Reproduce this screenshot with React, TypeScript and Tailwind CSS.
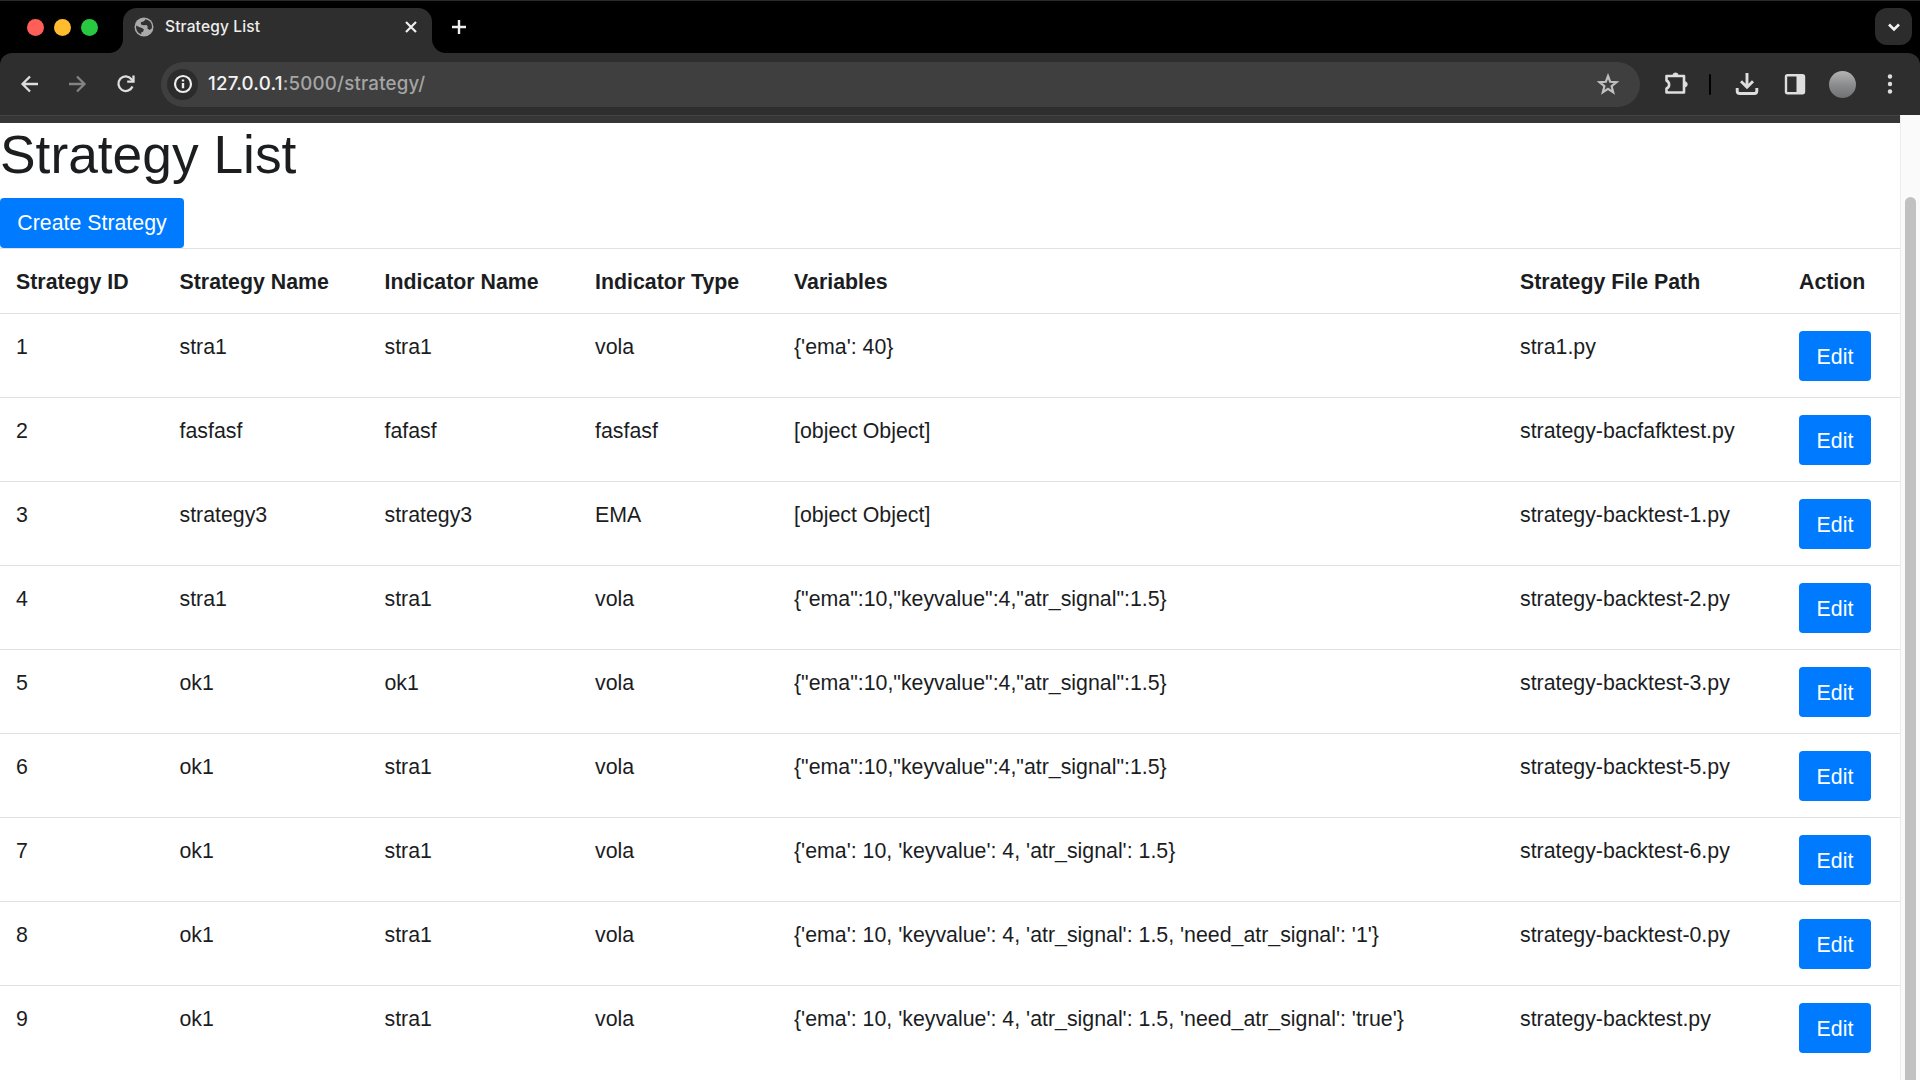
import React from "react";

type Strategy = {
  id: number;
  name: string;
  indicator: string;
  type: string;
  variables: string;
  path: string;
};

const strategies: Strategy[] = [
  { id: 1, name: "stra1", indicator: "stra1", type: "vola", variables: "{'ema': 40}", path: "stra1.py" },
  { id: 2, name: "fasfasf", indicator: "fafasf", type: "fasfasf", variables: "[object Object]", path: "strategy-bacfafktest.py" },
  { id: 3, name: "strategy3", indicator: "strategy3", type: "EMA", variables: "[object Object]", path: "strategy-backtest-1.py" },
  { id: 4, name: "stra1", indicator: "stra1", type: "vola", variables: '{"ema":10,"keyvalue":4,"atr_signal":1.5}', path: "strategy-backtest-2.py" },
  { id: 5, name: "ok1", indicator: "ok1", type: "vola", variables: '{"ema":10,"keyvalue":4,"atr_signal":1.5}', path: "strategy-backtest-3.py" },
  { id: 6, name: "ok1", indicator: "stra1", type: "vola", variables: '{"ema":10,"keyvalue":4,"atr_signal":1.5}', path: "strategy-backtest-5.py" },
  { id: 7, name: "ok1", indicator: "stra1", type: "vola", variables: "{'ema': 10, 'keyvalue': 4, 'atr_signal': 1.5}", path: "strategy-backtest-6.py" },
  { id: 8, name: "ok1", indicator: "stra1", type: "vola", variables: "{'ema': 10, 'keyvalue': 4, 'atr_signal': 1.5, 'need_atr_signal': '1'}", path: "strategy-backtest-0.py" },
  { id: 9, name: "ok1", indicator: "stra1", type: "vola", variables: "{'ema': 10, 'keyvalue': 4, 'atr_signal': 1.5, 'need_atr_signal': 'true'}", path: "strategy-backtest.py" },
];

const columns = [
  "Strategy ID",
  "Strategy Name",
  "Indicator Name",
  "Indicator Type",
  "Variables",
  "Strategy File Path",
  "Action",
];

function TabStrip() {
  return (
    <div className="flex h-[53px] shrink-0 items-start border-t border-[#2a2a2a] bg-black">
      <div className="flex items-center gap-[10px] pl-[27px] pt-[18px]">
        <span className="size-[17px] rounded-full bg-[#ff5f57]" />
        <span className="size-[17px] rounded-full bg-[#febc2e]" />
        <span className="size-[17px] rounded-full bg-[#28c840]" />
      </div>
      <div className="mt-[7px] flex h-[45px] items-end pl-[11px]">
        <svg className="block size-[14px]" viewBox="0 0 14 14" fill="#2d2e2d">
          <path d="M14 0v14H0A14 14 0 0 0 14 0Z" />
        </svg>
        <div className="flex h-[45px] w-[309px] items-start rounded-t-[14px] bg-[#2d2e2d] pl-[11px] pr-[14px] pt-[9px]">
          <svg className="size-[20px]" viewBox="0 0 20 20">
            <circle cx="10" cy="10" r="9.5" fill="#a9abaa" />
            <path
              d="M11.5 2.2 10 4.2 6.8 5.2l.2 2.3 2.4.8 3.2-.3 1.2 1.7-.5 1.7 2.3 1.6 2.1-1.6.3-1.6a8 8 0 0 0-6.5-7.6ZM2.1 8.6l3.6 1.7 2.3.6 1.9 1.5-.7 2-2 1.1.1 2.1A8 8 0 0 1 2.1 8.6Z"
              fill="#303130"
            />
          </svg>
          <span className="ml-[11px] mt-[-1px] font-['Inter'] text-[15.5px] font-medium leading-[22px] tracking-[0.15px] text-[#eeeeee]">
            Strategy List
          </span>
          <svg className="ml-auto mt-[3px] size-[14px]" viewBox="0 0 14 14" fill="none" stroke="#eeeeee" strokeWidth="2.2">
            <path d="m2 2 10 10M12 2 2 12" />
          </svg>
        </div>
        <svg className="block size-[14px]" viewBox="0 0 14 14" fill="#2d2e2d">
          <path d="M0 0v14h14A14 14 0 0 1 0 0Z" />
        </svg>
      </div>
      <svg className="ml-[5px] mt-[18px] size-[16px]" viewBox="0 0 16 16" fill="none" stroke="#eeeeee" strokeWidth="2.4">
        <path d="M8 1v14M1 8h14" />
      </svg>
      <div className="ml-auto mr-[8px] mt-[7px] flex size-[37px] items-center justify-center rounded-[12px] bg-[#2b2c2b]">
        <svg className="size-[14px]" viewBox="0 0 14 14" fill="none" stroke="#f2f2f2" strokeWidth="2.6">
          <path d="m2 4.5 5 5 5-5" />
        </svg>
      </div>
    </div>
  );
}

function Toolbar() {
  return (
    <div className="h-[62px] shrink-0 bg-black">
      <div className="flex h-full items-center rounded-t-[12px] bg-[#2d2e2d] pl-[20px]">
        <svg className="size-[20px]" viewBox="0 0 20 20" fill="none" stroke="#dededf" strokeWidth="2.3">
          <path d="M18 10H3M10 2.5 2.5 10l7.5 7.5" />
        </svg>
        <svg className="ml-[27px] size-[20px]" viewBox="0 0 20 20" fill="none" stroke="#828382" strokeWidth="2.3">
          <path d="M2 10h15M10 2.5l7.5 7.5-7.5 7.5" />
        </svg>
        <svg className="ml-[29px] size-[20px]" viewBox="0 0 20 20" fill="none" stroke="#dededf" strokeWidth="2.3">
          <path d="M16.5 12.5A7.3 7.3 0 1 1 15.5 5.2L17.5 7.3" />
          <path d="M17.5 1.5v6.200h-6.300" />
        </svg>
        <div className="ml-[25px] flex h-[45px] w-[1479px] items-center rounded-full bg-[#3e3f3e] pl-[6px] pr-[20px]">
          <span className="flex size-[31px] items-center justify-center rounded-full bg-[#2b2c2b]">
            <svg className="size-[20px]" viewBox="0 0 20 20" fill="none" stroke="#eeeeee" strokeWidth="2.2">
              <circle cx="10" cy="10" r="8" />
              <path d="M10 9v5.200M10 5.600v2" strokeWidth="2.4" />
            </svg>
          </span>
          <span className="ml-[10px] whitespace-nowrap font-['Inter'] text-[18.7px] font-medium leading-[24px] tracking-[0.2px] text-[#a4a5a4]">
            <span className="text-[#f2f2f2]">127.0.0.1</span>:5000/strategy/
          </span>
          <svg className="ml-auto size-[24px]" viewBox="0 0 24 24" fill="none" stroke="#bfc0bf" strokeWidth="2.2">
            <path d="m12 4 2.200 5.800 6.300.4-4.900 4 1.600 6.100L12 16.900l-5.200 3.400 1.600-6.100-4.900-4 6.300-.4Z" />
          </svg>
        </div>
        <svg className="ml-[23px] size-[26px]" viewBox="0 0 26 26" fill="none" stroke="#dededf" strokeWidth="2.6" strokeLinejoin="round">
          <path d="M3.500 5h17.500v16.500H3.500v-4c3.500-1.500 3.500-6 0-8Z" />
          <path d="M10 4a2.500 2 0 0 1 5 0ZM22 10.800a2.200 2.500 0 0 1 0 5Z" fill="#dededf" strokeWidth="1" />
        </svg>
        <span className="ml-[20px] h-[21px] w-[2px] rounded bg-black" />
        <svg className="ml-[23px] size-[26px]" viewBox="0 0 26 26" fill="none" stroke="#dededf" strokeWidth="2.9">
          <path d="M13 2v13.500M7 10.200l6 6 6-6M3.200 17v3q0 2.500 2.500 2.500h14.600q2.500 0 2.500-2.500V17" />
        </svg>
        <svg className="ml-[22px] size-[26px]" viewBox="0 0 26 26">
          <rect x="4" y="4.200" width="18" height="18" rx="1.500" fill="none" stroke="#dededf" strokeWidth="2.400" />
          <path d="M14.500 4h7.500v18h-7.500z" fill="#dededf" />
        </svg>
        <span className="ml-[21px] size-[27px] rounded-full bg-linear-to-b from-[#b4b4b5] via-[#8c8d8e] to-[#707176]" />
        <svg className="ml-[28px] size-[20px]" viewBox="0 0 20 20" fill="#dededf">
          <circle cx="6" cy="2.500" r="2.200" />
          <circle cx="6" cy="10" r="2.200" />
          <circle cx="6" cy="17.500" r="2.200" />
        </svg>
      </div>
    </div>
  );
}

function StrategyTable() {
  return (
    <table className="w-full table-fixed border-collapse text-left text-[21.330px] leading-[32px] text-[#1b1d1f]">
      <colgroup>
        <col className="w-[163.500px]" />
        <col className="w-[205px]" />
        <col className="w-[210.500px]" />
        <col className="w-[199px]" />
        <col className="w-[726px]" />
        <col className="w-[279px]" />
        <col />
      </colgroup>
      <thead>
        <tr className="h-[65px] border-y border-[#dee2e6]">
          {columns.map((column) => (
            <th key={column} className="whitespace-nowrap px-[16px] py-0 pt-[2px] font-bold">
              {column}
            </th>
          ))}
        </tr>
      </thead>
      <tbody>
        {strategies.map((s) => (
          <tr key={s.id} className="h-[84px] border-b border-[#dee2e6] align-top last:border-b-0">
            {[s.id, s.name, s.indicator, s.type, s.variables, s.path].map((value, i) => (
              <td key={i} className="whitespace-nowrap px-[16px] pt-[17px]">
                {value}
              </td>
            ))}
            <td className="px-[16px] pt-[17px]">
              <button className="block h-[50px] w-[72px] rounded-[4px] bg-[#007bff] pt-[2px] text-center text-white">Edit</button>
            </td>
          </tr>
        ))}
      </tbody>
    </table>
  );
}

export default function App() {
  return (
    <div className="flex h-[1080px] w-[1920px] flex-col overflow-hidden bg-white font-['Liberation_Sans',Arial,sans-serif]">
      <TabStrip />
      <Toolbar />
      <div className="flex min-h-0 flex-1">
        <main className="w-[1900px] shrink-0 overflow-hidden">
          <div className="h-[8px] border-t border-[#434443] bg-[#353635]" />
          <h1 className="h-[75px] whitespace-nowrap text-[53.330px] font-normal leading-[63px] text-[#1b1d1f]">Strategy List</h1>
          <button className="block h-[50px] w-[184px] rounded-[4px] bg-[#007bff] text-center text-[21.330px] leading-[32px] text-white">
            Create Strategy
          </button>
          <StrategyTable />
        </main>
        <div className="flex w-[20px] justify-center border-l border-[#ececec] bg-[#fafafa] pt-[82px]">
          <div className="h-full w-[11px] rounded-t-full bg-[#c1c1c1]" />
        </div>
      </div>
    </div>
  );
}
